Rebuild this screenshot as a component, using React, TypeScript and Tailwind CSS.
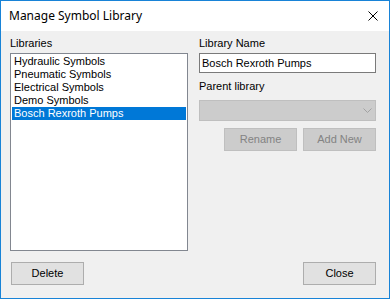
import { useState } from 'react'

const LIBRARIES = [
  'Hydraulic Symbols',
  'Pneumatic Symbols',
  'Electrical Symbols',
  'Demo Symbols',
  'Bosch Rexroth Pumps',
]

const UI_FONT = "font-['Liberation_Sans',Arial,sans-serif] text-[11px] leading-[13px]"

function WinButton({
  label,
  disabled = false,
}: {
  label: string
  disabled?: boolean
}) {
  return (
    <button
      type="button"
      disabled={disabled}
      className={
        disabled
          ? 'flex h-[23px] w-[73px] items-center justify-center border border-[#bfbfbf] bg-[#cccccc] text-[#838383]'
          : 'flex h-[23px] w-[73px] items-center justify-center border border-[#adadad] bg-[#e1e1e1] text-black'
      }
    >
      {label}
    </button>
  )
}

export default function App() {
  const [selected, setSelected] = useState(4)

  return (
    <div
      className={`flex h-[299px] w-[390px] flex-col border border-[#1883d7] bg-[#f0f0f0] text-black ${UI_FONT}`}
    >
      {/* title bar */}
      <div className="flex h-[30px] shrink-0 items-center justify-between bg-white pl-[8px] pr-[11px]">
        <span className="font-['Noto_Sans',sans-serif] text-[12px] leading-[16px] text-black">
          Manage Symbol Library
        </span>
        <svg width="10" height="10" viewBox="0 0 10 10" aria-hidden="true">
          <path d="M0.5 0.5 L9.5 9.5 M9.5 0.5 L0.5 9.5" stroke="#000" strokeWidth="1" />
        </svg>
      </div>

      {/* body */}
      <div className="flex flex-1 flex-col px-[9px] pt-[6px]">
        <div className="flex gap-[11px]">
          {/* left: libraries list */}
          <div className="flex w-[178px] flex-col">
            <span className="h-[13px]">Libraries</span>
            <div className="mt-[3px] h-[198px] border border-[#828790] bg-white p-px">
              {LIBRARIES.map((name, i) => (
                <div
                  key={name}
                  onClick={() => setSelected(i)}
                  className={
                    i === selected
                      ? 'h-[13px] bg-[#0078d7] pl-[2px] text-white'
                      : 'h-[13px] pl-[2px] text-black'
                  }
                >
                  {name}
                </div>
              ))}
            </div>
          </div>

          {/* right: name and parent */}
          <div className="flex w-[177px] flex-col">
            <span className="h-[13px]">Library Name</span>
            <div className="mt-[3px] flex h-[20px] items-center border border-[#7a7a7a] bg-white pl-[2px]">
              Bosch Rexroth Pumps
            </div>

            <span className="mt-[7px] h-[13px]">Parent library</span>
            <div className="mt-[7px] flex h-[21px] items-center justify-end border border-[#bfbfbf] bg-[#cccccc] pr-[3px]">
              <svg width="9" height="5" viewBox="0 0 9 5" aria-hidden="true">
                <path d="M0.5 0.5 L4.5 4.5 L8.5 0.5" fill="none" stroke="#a2a2a2" strokeWidth="1" />
              </svg>
            </div>

            <div className="mt-[7px] flex justify-end gap-[6px]">
              <WinButton label="Rename" disabled />
              <WinButton label="Add New" disabled />
            </div>
          </div>
        </div>

        {/* bottom buttons */}
        <div className="mt-[11px] flex justify-between pl-px pr-[4px]">
          <WinButton label="Delete" />
          <WinButton label="Close" />
        </div>
      </div>
    </div>
  )
}
